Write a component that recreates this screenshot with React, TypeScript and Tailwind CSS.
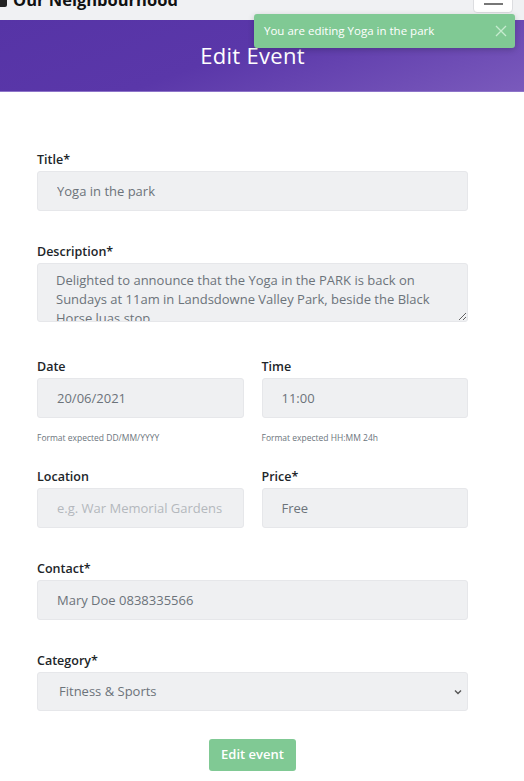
import React from 'react';

const font = { fontFamily: '"Open Sans", "Noto Sans", sans-serif' };

function Field({ label, children }: { label: string; children: React.ReactNode }) {
  return (
    <div className="flex flex-col">
      <label className="text-[12.5px] font-semibold text-[#212529] leading-[18px] mb-[2px]">{label}</label>
      {children}
    </div>
  );
}

const inputCls =
  'block w-full h-[40px] rounded-[3px] border border-[#e6e7ea] bg-[#eff0f2] px-[19px] text-[13px] text-[#6c737a] outline-none placeholder:text-[#b4b8bd]';

export default function App() {
  return (
    <div className="relative min-h-[781px] bg-white overflow-hidden" style={font}>
      {/* navbar, scrolled partly out of view */}
      <div className="h-[20px] bg-[#f0f1f3] relative">
        <div className="absolute left-[-3px] top-[-8px] flex items-center gap-[6px]">
          <div className="w-[10px] h-[13px] rounded-[2px] bg-[#222]" />
          <span className="text-[16.5px] font-bold text-[#111] leading-none">Our Neighbourhood</span>
        </div>
        <div className="absolute left-[473px] top-[-10px] w-[40px] h-[23px] rounded-[4px] border border-[#dcdde0] bg-white flex items-end justify-center pb-[7px]">
          <div className="w-[19px] h-[2px] bg-[#777]" />
        </div>
      </div>

      {/* header */}
      <div className="h-[72px] bg-[linear-gradient(160deg,#5634a6_0%,#5a37a9_45%,#7a5abc_100%)] flex items-center justify-center pr-[19px] border-b border-[#8d74c9]">
        <h1 className="text-[22px] text-white font-medium tracking-[0.3px]">Edit Event</h1>
      </div>

      {/* toast */}
      <div className="absolute left-[254px] top-[14px] w-[261px] h-[34px] rounded-[3px] bg-[#80c994] shadow-[0_2px_6px_rgba(0,0,0,0.2)] flex items-center pl-[10px] pr-[8px]">
        <span className="text-[11.5px] text-white flex-1">You are editing Yoga in the park</span>
        <svg width="12" height="12" viewBox="0 0 12 12" className="stroke-[#c6ebcf]" strokeWidth="1.3">
          <path d="M1 1L11 11M11 1L1 11" />
        </svg>
      </div>

      {/* form */}
      <form className="pl-[37px] pt-[59px] pb-[10px]">
        <div className="w-[431px] flex flex-col">
          <Field label="Title*">
            <input className={inputCls} defaultValue="Yoga in the park" />
          </Field>

          <div className="mt-[32px]">
            <Field label="Description*">
              <textarea
                className="block w-full h-[59px] rounded-[3px] border border-[#e6e7ea] bg-[#eff0f2] px-[18px] pt-[7px] text-[13px] leading-[19px] text-[#6c737a] outline-none resize-y overflow-hidden"
                defaultValue="Delighted to announce that the Yoga in the PARK is back on Sundays at 11am in Landsdowne Valley Park, beside the Black Horse luas stop."
              />
            </Field>
          </div>

          <div className="mt-[36px] grid grid-cols-2 gap-x-[18px]">
            <Field label="Date">
              <input className={inputCls} defaultValue="20/06/2021" />
              <span className="mt-[14px] text-[8.5px] leading-[12px] text-[#6c757d]">Format expected DD/MM/YYYY</span>
            </Field>
            <Field label="Time">
              <input className={inputCls} defaultValue="11:00" />
              <span className="mt-[14px] text-[8.5px] leading-[12px] text-[#6c757d]">Format expected HH:MM 24h</span>
            </Field>
          </div>

          <div className="mt-[24px] grid grid-cols-2 gap-x-[18px]">
            <Field label="Location">
              <input className={inputCls} placeholder="e.g. War Memorial Gardens" />
            </Field>
            <Field label="Price*">
              <input className={inputCls} defaultValue="Free" />
            </Field>
          </div>

          <div className="mt-[32px]">
            <Field label="Contact*">
              <input className={inputCls} defaultValue="Mary Doe 0838335566" />
            </Field>
          </div>

          <div className="mt-[32px]">
            <Field label="Category*">
              <div className="relative">
                <select className={inputCls + ' !h-[39px] appearance-none pl-[21px]'} defaultValue="fitness">
                  <option value="fitness">Fitness &amp; Sports</option>
                </select>
                <svg width="8" height="6" viewBox="0 0 8 6" className="absolute right-[6px] top-[17px] stroke-[#555]" strokeWidth="1.4" fill="none">
                  <path d="M1 1.5L4 4.5L7 1.5" />
                </svg>
              </div>
            </Field>
          </div>

          <div className="mt-[28px] flex justify-center">
            <button type="button" className="w-[87px] h-[32px] rounded-[3px] bg-[#80c994] text-white text-[13px] font-semibold">
              Edit event
            </button>
          </div>
        </div>
      </form>
    </div>
  );
}
